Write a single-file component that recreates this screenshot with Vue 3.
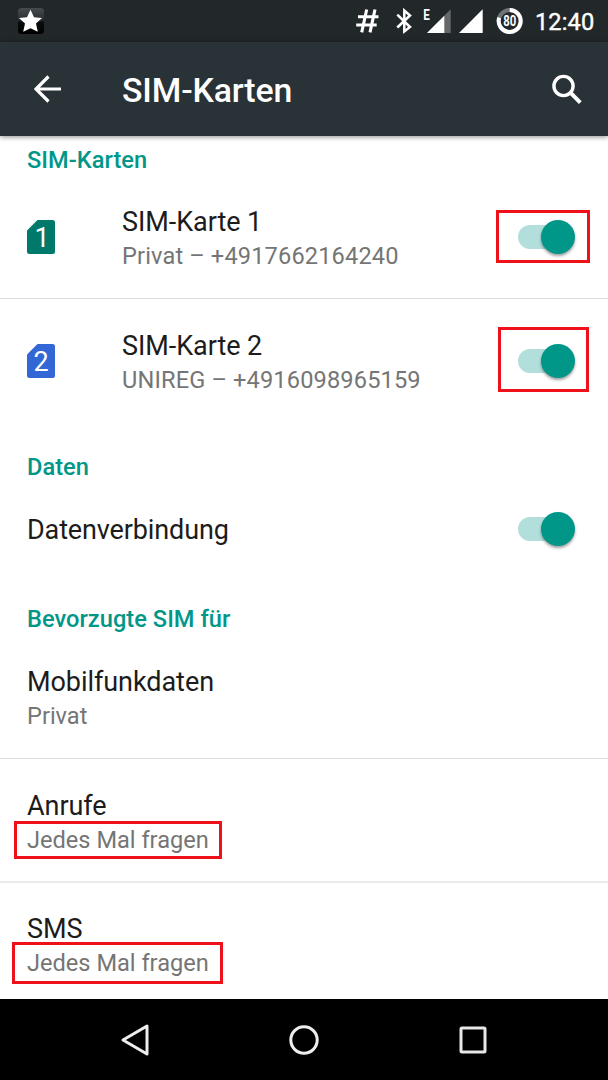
<script setup>
const sims = [
  { id: 1, color: '#00796b', title: 'SIM-Karte 1', sub: 'Privat – +4917662164240' },
  { id: 2, color: '#3367d6', title: 'SIM-Karte 2', sub: 'UNIREG – +4916098965159' },
]
const preferred = [
  { key: 'data', title: 'Mobilfunkdaten', sub: 'Privat', marked: false },
  { key: 'calls', title: 'Anrufe', sub: 'Jedes Mal fragen', marked: true },
  { key: 'sms', title: 'SMS', sub: 'Jedes Mal fragen', marked: true },
]
</script>

<template>
  <div class="screen">
    <div class="status">
      <svg class="star" width="26" height="26" viewBox="0 0 26 26">
        <defs>
          <linearGradient id="starBg" x1="0" y1="0" x2="0" y2="1">
            <stop offset="0" stop-color="#454c50" />
            <stop offset="0.45" stop-color="#2a2e30" />
            <stop offset="0.55" stop-color="#0b0c0d" />
            <stop offset="1" stop-color="#000" />
          </linearGradient>
        </defs>
        <rect width="26" height="26" rx="3.5" fill="url(#starBg)" />
        <path d="M12.500 1.800l3.500 7.500 8 .6-6 5.600 1.800 8.300-7.300-3.600-7.300 3.600 1.800-8.300-6-5.600 8-.6z" fill="#fff" />
      </svg>
      <svg class="tray" width="180" height="42" viewBox="0 0 180 42">
        <path d="M11.700 9.500L6.700 32.300M20 9.500L15 32.300M3 16.800H23.500M1.200 25H21.700" fill="none" stroke="#fff" stroke-width="3.100" />
        <path d="M42.300 14.700L55 27L49.300 31.500V10.500L55 15.500L42.300 27.500" fill="none" stroke="#fff" stroke-width="2.500" />
        <text x="68.300" y="20" class="edge" textLength="6.500" lengthAdjust="spacingAndGlyphs">E</text>
        <path d="M95.700 9.300V33H72z" fill="#64686a" />
        <path d="M89.300 15.700V33H72z" fill="#fff" />
        <path d="M127.700 9.300V33H104z" fill="#fff" />
        <circle cx="154.700" cy="21" r="11" fill="none" stroke="#6f7375" stroke-width="4" />
        <path d="M154.700 10A11 11 0 1 1 144.200 17.600" fill="none" stroke="#fff" stroke-width="4" />
        <text x="154.700" y="25.700" class="pct" textLength="13" lengthAdjust="spacingAndGlyphs">80</text>
      </svg>
      <span class="clock">12:40</span>
    </div>

    <header class="bar">
      <svg class="back" width="28" height="28" viewBox="0 0 28 28">
        <path d="M27 14H2M14.500 1.500L2 14L14.500 26.500" fill="none" stroke="#fff" stroke-width="3.200" />
      </svg>
      <h1>SIM-Karten</h1>
      <svg class="search" width="32" height="32" viewBox="0 0 32 32">
        <circle cx="12.500" cy="12" r="9.600" fill="none" stroke="#fff" stroke-width="3.400" />
        <path d="M19.400 18.700L29.300 28.600" stroke="#fff" stroke-width="4" />
      </svg>
    </header>

    <main>
      <h2 class="first">SIM-Karten</h2>
      <div v-for="sim in sims" :key="sim.id" class="row" :class="'sim' + sim.id">
        <svg class="card" width="28" height="34" viewBox="0 0 28 34">
          <path d="M10.500 0H25.500Q28 0 28 2.500V31.500Q28 34 25.500 34H2.500Q0 34 0 31.500V10.500z" :fill="sim.color" />
          <text :x="sim.id === 1 ? 15 : 14.2" y="27" class="digit">{{ sim.id }}</text>
        </svg>
        <div class="texts">
          <div class="title">{{ sim.title }}</div>
          <div class="sub number">{{ sim.sub }}</div>
        </div>
        <div class="switch"><i class="thumb"></i><b class="mark"></b></div>
      </div>

      <h2>Daten</h2>
      <div class="row single">
        <div class="title">Datenverbindung</div>
        <div class="switch"><i class="thumb"></i></div>
      </div>

      <h2>Bevorzugte SIM für</h2>
      <div v-for="p in preferred" :key="p.key" class="row" :class="p.key">
        <div class="texts">
          <div class="title">{{ p.title }}</div>
          <div class="sub">{{ p.sub }}<b v-if="p.marked" class="mark"></b></div>
        </div>
      </div>
    </main>

    <nav>
      <svg width="30" height="34" viewBox="0 0 30 34">
        <path d="M27 3V31L3 17z" fill="none" stroke="#eee" stroke-width="3" stroke-linejoin="round" />
      </svg>
      <svg width="30" height="34" viewBox="0 0 30 34">
        <circle cx="15" cy="17" r="13.200" fill="none" stroke="#eee" stroke-width="3" />
      </svg>
      <svg width="30" height="34" viewBox="0 0 30 34">
        <rect x="3" y="5" width="24" height="24" rx="1" fill="none" stroke="#e6e8e8" stroke-width="3" />
      </svg>
    </nav>
  </div>
</template>

<style>
body { margin: 0; background: #fff; }
</style>

<style scoped>
.screen {
  width: 608px;
  height: 1080px;
  display: flex;
  flex-direction: column;
  overflow: hidden;
  background: #fff;
  font-family: Roboto, "Liberation Sans", sans-serif;
}
svg { display: block; flex: none; }
.status {
  height: 42px;
  flex: none;
  display: flex;
  align-items: center;
  background: #22272a;
}
.star { margin-left: 17.500px; }
.tray { margin-left: 311.500px; }
.edge { font-size: 14px; font-weight: 700; fill: #fff; }
.pct { font-size: 14px; font-weight: 700; fill: #fff; text-anchor: middle; }
.clock {
  padding-top: 2px;
  font-size: 23.6px;
  line-height: 28px;
  font-weight: 400;
  letter-spacing: 0.1px;
  -webkit-text-stroke: 0.4px #fff;
  color: #fff;
}
.bar {
  height: 94px;
  flex: none;
  display: flex;
  align-items: center;
  background: #283237;
  box-shadow: 0 1px 5px rgba(0, 0, 0, 0.45);
  position: relative;
  z-index: 1;
}
.back { margin: 0 0 0 34px; }
h1 {
  flex: 1;
  margin: 4px 0 0 60px;
  font-size: 33.8px;
  line-height: 40px;
  font-weight: 500;
  letter-spacing: -0.15px;
  color: #fff;
}
.search { margin: 1px 25px 0 0; }
main { flex: none; height: 863px; }
h2 {
  margin: 0;
  padding: 31px 27px 2px;
  font-size: 23.6px;
  line-height: 28px;
  font-weight: 500;
  letter-spacing: 0.04px;
  color: #009688;
}
h2.first { padding: 10px 27px 1px; }
.row {
  box-sizing: border-box;
  height: 124px;
  padding-left: 27px;
  padding-right: 33px;
  display: flex;
  align-items: center;
}
.sim1, .data { border-bottom: 1px solid #dedede; }
.sim2 { height: 123px; }
.calls { border-bottom: 2px solid #ebebeb; }
.sms { height: 116px; }
.single { height: 91px; justify-content: space-between; }
.single .title { padding-top: 3px; letter-spacing: -0.13px; }
.card { margin-right: 67px; }
.digit { font-size: 27px; fill: #fff; text-anchor: middle; }
.texts { flex: 1; align-self: flex-start; padding-top: 29px; }
.sms .texts { padding-top: 28px; }
.title {
  font-size: 27px;
  line-height: 36px;
  letter-spacing: -0.06px;
  color: #1c1c1c;
  white-space: nowrap;
}
.sub {
  position: relative;
  width: max-content;
  font-size: 23.6px;
  line-height: 33px;
  color: #757575;
}
.number { letter-spacing: 0.14px; }
.switch {
  position: relative;
  width: 57px;
  height: 24px;
  border-radius: 12px;
  background: linear-gradient(90deg, #b2dfdb 40px, transparent 40px);
}
.thumb {
  position: absolute;
  right: 0;
  top: -5px;
  width: 34px;
  height: 34px;
  border-radius: 50%;
  background: #009688;
  box-shadow: 0 2px 3px rgba(0, 0, 0, 0.38);
}
.mark {
  position: absolute;
  box-sizing: border-box;
  border: 3px solid #ee1119;
}
.sim1 .mark { left: -22px; top: -15px; width: 94px; height: 53px; }
.sim2 .mark { left: -20px; top: -22px; width: 91px; height: 65px; }
.calls .mark { left: -13px; top: -3px; width: 208px; height: 38px; }
.sms .mark { left: -15px; top: -5px; width: 211px; height: 42px; }
nav {
  height: 81px;
  flex: none;
  display: flex;
  justify-content: space-between;
  align-items: center;
  padding: 0 120px;
  background: #000;
}
</style>
